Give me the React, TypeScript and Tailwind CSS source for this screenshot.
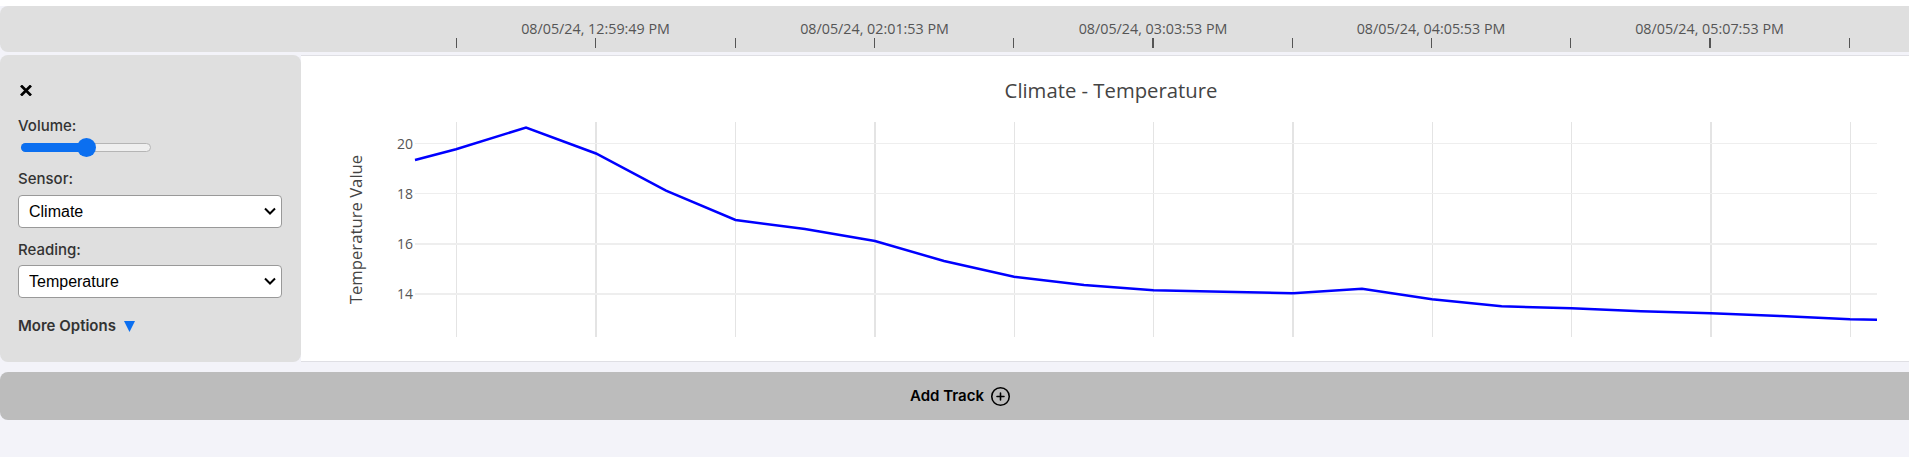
import React from "react";
import { CirclePlus } from "lucide-react";

const rulerTicks = [456.5, 595.5, 735.5, 874.5, 1013.5, 1153, 1292.5, 1431.5, 1570.5, 1710, 1849.5];
const gridLines = [456.5, 596, 735.5, 875, 1014.5, 1153.5, 1293, 1432.5, 1571.5, 1711, 1850.5];

const labels = [
  { x: 595.5, text: "08/05/24, 12:59:49 PM" },
  { x: 874.5, text: "08/05/24, 02:01:53 PM" },
  { x: 1153, text: "08/05/24, 03:03:53 PM" },
  { x: 1431, text: "08/05/24, 04:05:53 PM" },
  { x: 1709.5, text: "08/05/24, 05:07:53 PM" },
];

const yTicks = [
  { y: 143.5, w: 1, text: "20" },
  { y: 193.5, w: 1, text: "18" },
  { y: 244, w: 2, text: "16" },
  { y: 294, w: 2, text: "14" },
];

const linePoints =
  "415,160 456,149.3 526,127.5 596,153.5 666,190.7 735.5,220 805,229 875,241 944,261 1014,276.7 1084,285 1153.5,290.3 1223,291.8 1293,293.3 1362,288.7 1432,299.3 1501.6,306.3 1571.5,308.3 1641,311.3 1711,313.3 1781,316 1850,319.3 1877,319.7";

function Ruler() {
  return (
    <div className="flex h-[46px] rounded-l-lg bg-[#dfdfdf]">
      <div className="w-[301px]" />
      <svg className="h-[46px] w-[1608px]" viewBox="301 6 1608 46">
        {labels.map((l) => (
          <text
            key={l.text}
            x={l.x}
            y={34}
            textAnchor="middle"
            fontSize={14.3}
            fill="#555"
            fontFamily="'Open Sans', sans-serif"
          >
            {l.text}
          </text>
        ))}
        {rulerTicks.map((x) => (
          <line
            key={x}
            x1={x}
            x2={x}
            y1={38}
            y2={48}
            stroke="#555"
            strokeWidth={Number.isInteger(x) ? 2 : 1}
          />
        ))}
      </svg>
    </div>
  );
}

function Picker({ value }: { value: string }) {
  return (
    <div className="relative h-[33px] w-[264px]">
      <select className="h-full w-full appearance-none rounded border border-[#999] bg-white pl-[10px] font-['Liberation_Sans',sans-serif] text-[16px] font-normal text-black">
        <option>{value}</option>
      </select>
      <svg
        className="pointer-events-none absolute right-[6px] top-[12px] h-[9px] w-[12px]"
        viewBox="0 0 12 9"
      >
        <path d="M1 1.5 6 6.5 11 1.5" stroke="#000" strokeWidth={2} fill="none" />
      </svg>
    </div>
  );
}

function Sidebar() {
  return (
    <div className="flex w-[301px] shrink-0 flex-col rounded-lg bg-[#dfdfdf] pl-[18px] font-['Inter',sans-serif] text-[15px] font-medium text-[#333]">
      <svg className="ml-[2px] mt-[30px] h-[11px] w-[12px]" viewBox="0 0 12 11">
        <path d="M1 .5 11 10.5M11 .5 1 10.5" stroke="#000" strokeWidth={2.7} fill="none" />
      </svg>
      <label className="mt-[20px] h-[20px] leading-[20px]">Volume:</label>
      <div className="relative ml-[3px] mt-[7px] h-[9px] w-[130px] rounded-full border border-[#b5b5b5] bg-[#efefef]">
        <div className="absolute -left-px -top-px h-[9px] w-[68px] rounded-full bg-[#0b6ff0]" />
        <div className="absolute left-[55px] top-[-6px] h-[19px] w-[19px] rounded-full bg-[#0b6ff0]" />
      </div>
      <label className="mt-[17px] h-[20px] leading-[20px]">Sensor:</label>
      <div className="mt-[6px]">
        <Picker value="Climate" />
      </div>
      <label className="mt-[12px] h-[20px] leading-[20px]">Reading:</label>
      <div className="mt-[5px]">
        <Picker value="Temperature" />
      </div>
      <div className="mt-[18px] flex h-[20px] items-center gap-[8px] font-semibold leading-[20px]">
        <span>More Options</span>
        <svg className="h-[11px] w-[11px]" viewBox="0 0 11 11">
          <polygon points="0,0 11,0 5.5,11" fill="#0b6ff0" />
        </svg>
      </div>
    </div>
  );
}

function Chart() {
  return (
    <div className="flex-1 border-y border-[#dfdfe4] bg-white">
      <svg className="block h-[305px] w-[1608px]" viewBox="301 56 1608 305" fontFamily="'Open Sans', sans-serif">
        <text x={1111} y={98} textAnchor="middle" fontSize={20.3} fill="#444">
          Climate - Temperature
        </text>
        <text
          transform="translate(362 229.5) rotate(-90)"
          textAnchor="middle"
          fontSize={16.7}
          fill="#444"
        >
          Temperature Value
        </text>
        {gridLines.map((x) => (
          <line
            key={x}
            x1={x}
            x2={x}
            y1={122}
            y2={337}
            stroke="#e4e4e4"
            strokeWidth={Number.isInteger(x) ? 2 : 1}
          />
        ))}
        {yTicks.map((t) => (
          <g key={t.text}>
            <line x1={415} x2={1877} y1={t.y} y2={t.y} stroke="#eeeeee" strokeWidth={t.w} />
            <text x={413} y={t.y + 5} textAnchor="end" fontSize={14} fill="#555">
              {t.text}
            </text>
          </g>
        ))}
        <polyline points={linePoints} fill="none" stroke="#0000ff" strokeWidth={2.5} />
      </svg>
    </div>
  );
}

export default function App() {
  return (
    <div className="min-h-screen overflow-hidden bg-[#f3f3f9]">
      <div className="h-[6px] bg-white" />
      <Ruler />
      <div className="mt-[3px] flex h-[307px]">
        <Sidebar />
        <Chart />
      </div>
      <button className="mt-[10px] flex h-[48px] w-full items-center justify-center gap-[6px] rounded-l-lg bg-[#bcbcbc] pl-[12px] font-['Inter',sans-serif] text-[15px] font-semibold text-black">
        Add Track
        <CirclePlus size={21} strokeWidth={1.8} />
      </button>
    </div>
  );
}
